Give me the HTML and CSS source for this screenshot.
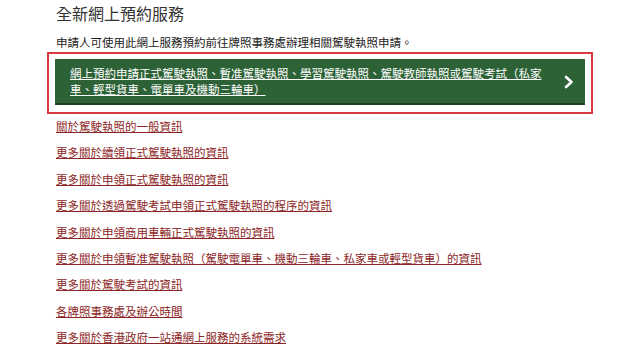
FILE: index.html
```html
<!DOCTYPE html>
<html lang="zh-Hant">
<head>
  <meta charset="UTF-8" />
  <meta name="viewport" content="width=device-width, initial-scale=1.0"/>
  <title>全新網上預約服務</title>
  <link rel="stylesheet" href="styles.css">
</head>
<body>

  <div class="page">
    <!-- 標題 -->
    <h1 class="title">全新網上預約服務</h1>
    <p class="intro">申請人可使用此網上服務預約前往牌照事務處辦理相關駕駛執照申請。</p>

    <!-- 預約按鈕 -->
    <div class="cta-wrap">
      <a href="#" class="cta">
        <span class="cta-text">網上預約申請正式駕駛執照、暫准駕駛執照、學習駕駛執照、駕駛教師執照或駕駛考試（私家車、輕型貨車、電單車及機動三輪車）</span>
        <svg class="chevron" width="10" height="14" viewBox="0 0 10 14">
          <path d="M2 2 L7.5 7 L2 12" fill="none" stroke="#fff" stroke-width="2.6" stroke-linecap="round" stroke-linejoin="round"/>
        </svg>
      </a>
    </div>

    <!-- 相關連結 -->
    <ul class="links">
      <li><a href="#">關於駕駛執照的一般資訊</a></li>
      <li><a href="#">更多關於續領正式駕駛執照的資訊</a></li>
      <li><a href="#">更多關於申領正式駕駛執照的資訊</a></li>
      <li><a href="#">更多關於透過駕駛考試申領正式駕駛執照的程序的資訊</a></li>
      <li><a href="#">更多關於申領商用車輛正式駕駛執照的資訊</a></li>
      <li><a href="#">更多關於申領暫准駕駛執照（駕駛電單車、機動三輪車、私家車或輕型貨車）的資訊</a></li>
      <li><a href="#">更多關於駕駛考試的資訊</a></li>
      <li><a href="#">各牌照事務處及辦公時間</a></li>
      <li><a href="#">更多關於香港政府一站通網上服務的系統需求</a></li>
    </ul>
  </div>

</body>
</html>
```

FILE: styles.css
```css
body {
  margin: 0;
  background: #fff;
  font-family: "Liberation Sans", "Noto Sans CJK TC", sans-serif;
  color: #222;
}

.page {
  width: 546px;
  margin-left: 47px;
}

.title {
  margin: 0;
  padding: 5px 0 0 9px;
  font-size: 16px;
  line-height: 20px;
  font-weight: normal;
  color: #333;
}

.intro {
  margin: 0;
  padding: 10px 0 0 9px;
  font-size: 11.5px;
  line-height: 16px;
}

/* 預約按鈕 */
.cta-wrap {
  margin-top: 1px;
  border: 2px solid #d9393f;
  padding: 5px 6px 7px;
}

.cta {
  display: flex;
  align-items: center;
  justify-content: space-between;
  background: #2c6236;
  border-bottom: 2px solid #1c3f22;
  padding: 7px 11px 5px 15px;
  color: #fff;
  text-decoration: none;
}

.cta-text {
  width: 482px;
  font-size: 11.5px;
  line-height: 16px;
  text-decoration: underline;
}

.chevron {
  display: block;
}

/* 相關連結 */
.links {
  list-style: none;
  margin: 0;
  padding: 0 0 0 9px;
}

.links li {
  line-height: 26.4px;
  font-size: 11.5px;
}

.links a {
  color: #8c2626;
}
```
